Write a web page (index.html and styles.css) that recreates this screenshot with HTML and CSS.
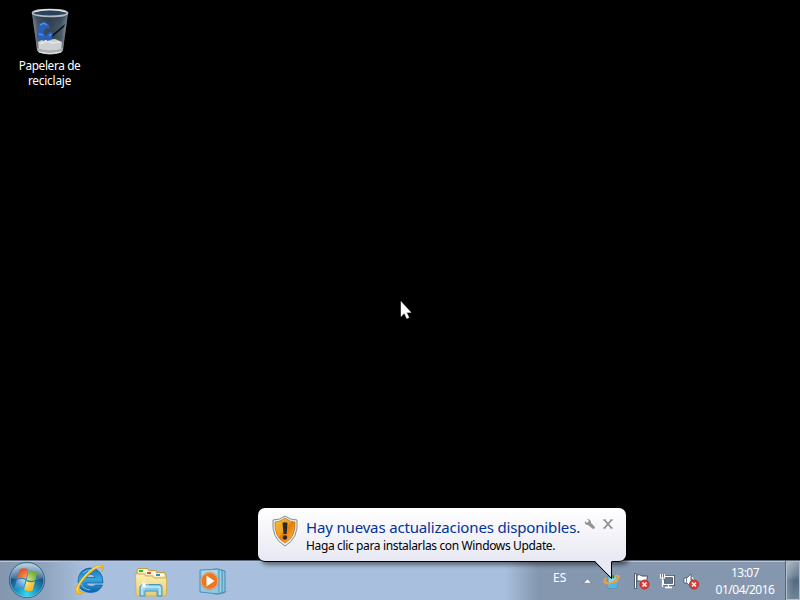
FILE: index.html
```
<!DOCTYPE html>
<html lang="es">
<head>
<meta charset="utf-8">
<title>Escritorio</title>
<link rel="stylesheet" href="styles.css">
</head>
<body>
<main class="desktop">
  <div class="shortcut">
    <svg class="bin" width="40" height="48" viewBox="0 0 40 48">
      <defs>
        <linearGradient id="glass"><stop offset="0" stop-color="#a5adb3"/><stop offset=".16" stop-color="#43505c"/><stop offset=".5" stop-color="#243343"/><stop offset=".82" stop-color="#44515c"/><stop offset="1" stop-color="#a7aeb3"/></linearGradient>
        <linearGradient id="binShade" x2="0" y2="1"><stop offset="0" stop-color="#142e4c" stop-opacity=".6"/><stop offset=".6" stop-color="#8b949b" stop-opacity=".1"/><stop offset="1" stop-color="#c8ccce" stop-opacity=".8"/></linearGradient>
      </defs>
      <path d="M2 6l5 37q1 4 13 4t13-4l5-37z" fill="url(#glass)"/>
      <path d="M2 6l5 37q1 4 13 4t13-4l5-37z" fill="url(#binShade)"/>
      <path d="M35 17L22 28l-1 3 13-11z" fill="#0b1119"/>
      <path d="M8 35q4-3 10-2l7-1 7 3-1 8q-12 4-22 0z" fill="#cdd0d0"/>
      <path d="M10 37l7-3 5 2 8-1" stroke="#e6e8e8" fill="none" stroke-width="1.5"/>
      <path d="M9 18l5-3 5 3 1 4-4-1-3 4-5-2zM7 25l5-1 2 3 3 3-3 4-6-3zM16 29l4-5 3 3-2 6-4 1z" fill="#2860bd"/>
      <path d="M10 18l4-2 3 2M9 27l4 1M19 29l2-2" stroke="#568deb" stroke-width="1.500" fill="none"/>
      <ellipse cx="20" cy="6" rx="17.5" ry="3.4" fill="#29435c" stroke="#b4babe" stroke-width="1.7"/>
      <path d="M4 5q16-5 32 0" stroke="#eee" stroke-width="1" fill="none"/>
      <path d="M7 41q13 5 26 0l-1 4q-12 5-24 0z" fill="#a9adaf"/>
      <path d="M9 45q11 3 22 0" stroke="#eee" fill="none"/>
    </svg>
    <div class="label"><span class="label-a">Papelera de</span><span class="label-b">reciclaje</span></div>
  </div>

  <svg class="cursor" width="12" height="19" viewBox="0 0 12 19"><path d="M1 .5v15l3.300-3.200 2.500 5.300 2.200-1-2.400-5.200h4.400z" fill="#fff" stroke="#e5e5ef" stroke-width=".5"/></svg>

  <footer class="taskbar">
    <div class="apps">
      <svg class="start" width="38" height="38" viewBox="0 0 38 38">
        <defs>
          <radialGradient id="orb" cx=".5" cy=".9" r=".9"><stop offset="0" stop-color="#35d8f5"/><stop offset=".38" stop-color="#198db8"/><stop offset=".65" stop-color="#1d5380"/><stop offset="1" stop-color="#6b91b4"/></radialGradient>
          <linearGradient id="orbShine" x2="0" y2="1"><stop offset="0" stop-color="#e5eff6" stop-opacity=".7"/><stop offset="1" stop-color="#b5d2e7" stop-opacity=".15"/></linearGradient>
          <radialGradient id="redPane" cx="1" cy="1" r="1"><stop offset="0" stop-color="#f8b46a"/><stop offset="1" stop-color="#e4582a"/></radialGradient>
          <radialGradient id="greenPane" cx="0" cy="1" r="1"><stop offset="0" stop-color="#dbe99b"/><stop offset="1" stop-color="#79ae31"/></radialGradient>
          <radialGradient id="bluePane" cx="1" cy="0" r="1"><stop offset="0" stop-color="#c0e8f6"/><stop offset="1" stop-color="#3f8fd0"/></radialGradient>
          <radialGradient id="yellowPane" cx="0" cy="0" r="1"><stop offset="0" stop-color="#fff3a8"/><stop offset="1" stop-color="#f6b925"/></radialGradient>
        </defs>
        <circle cx="19" cy="19" r="17.700" fill="url(#orb)" stroke="#2c5e82" stroke-width=".8"/>
        <circle cx="19" cy="19" r="16.800" fill="none" stroke="#a2ccdf" stroke-opacity=".5"/>
        <path d="M3 17Q4 3 19 2.500Q34 3 35 17Q19 23 3 17z" fill="url(#orbShine)"/>
        <path d="M11.700 8.300q4.500-2 8.500.3l-2.300 9.500q-4.200-2.300-8.700-.3z" fill="url(#redPane)"/>
        <path d="M21 9.400q4.200 2.500 8.600.5l-2.300 9.200q-4.400 2-8.600-.5z" fill="url(#greenPane)"/>
        <path d="M8.800 19q4.500-2 8.700.3l-2.300 8.900q-4.200-2.300-8.700-.5z" fill="url(#bluePane)"/>
        <path d="M18.400 20q4.200 2.300 8.600.3l-2.300 9q-4.400 2-8.600-.7z" fill="url(#yellowPane)"/>
      </svg>
      <svg class="ie" width="34" height="34" viewBox="0 0 34 34">
        <defs><linearGradient id="eBlue" x2="0" y2="1"><stop offset="0" stop-color="#1a6fb8"/><stop offset=".45" stop-color="#38a6de"/><stop offset="1" stop-color="#0962aa"/></linearGradient></defs>
        <path d="M30 20H13q1 3.500 5 3.500 3 0 4.500-1.500H29.500q-3 7.500-12 7.500Q5 29 5 17.500 6 5.500 17.500 5q12.500 1 12.500 15zM13.500 14.500h8.500Q21.500 11.300 17.700 11.300t-4.200 3.200z" fill="url(#eBlue)" stroke="#1266a9" stroke-width=".8"/>
        <path d="M10 10q4-4 10-3M8 21q2 5 9 6" stroke="#6bcaf0" stroke-width="1" fill="none"/>
        <path d="M29 9q4-7-1-7-7 0-15 9Q0 25 3 30q2 3 9-1-5 1-6-2-1-4 7-13Q23 4 28 4q2 0 1 5z" fill="#f6bd28" stroke="#db9b16" stroke-width=".5"/>
        <path d="M27 3Q18 5 11 14 4 23 4 28" stroke="#ffe477" fill="none"/>
      </svg>
      <svg class="folder" width="34" height="32" viewBox="0 0 34 32">
        <defs><linearGradient id="paper" x2="0" y2="1"><stop offset="0" stop-color="#fdf0b4"/><stop offset="1" stop-color="#e8cd70"/></linearGradient></defs>
        <path d="M3 2l1-1.500h10l1 2h7l1 2h8l1 3v18l-2 2H5l-2-3z" fill="#efdb8f" stroke="#c09e4b"/>
        <path d="M4.500 1.500h9v3h-9zM12 3.500h9v3h-9zM20 5.500h10v3H20z" fill="#fffdf2"/>
        <path d="M1.500 6h9l1 2h7l1.500 2h12.500V26q0 2-2 2H4q-2 0-2-2z" fill="url(#paper)" stroke="#cfb263"/>
        <path d="M5 2h4v2H5z" fill="#27b72c"/><path d="M13 4h4v2h-4z" fill="#db5028"/><path d="M22 6h4v2h-4z" fill="#2d92cc"/>
        <path d="M6 28v-9q0-2.500 3-2.500h16q3 0 3 2.500v9h-5v-5H11v5z" fill="#83c7e4" stroke="#4796be"/>
        <path d="M8 27v-7q0-1 1-1h16q1 0 1 1v7" stroke="#c5ebf7" stroke-width="1.500" fill="none"/>
        <path d="M10 12v10M5 17h10M7 14l6 6M13 14l-6 6" stroke="#fffef0" stroke-width=".6"/>
        <circle cx="10" cy="17" r="1.700" fill="#fff"/>
      </svg>
      <svg class="media" width="30" height="28" viewBox="0 0 30 28">
        <path d="M22 24l7-1-5 3-6 1z" fill="#64778e" opacity=".45"/>
        <path d="M17 1l9 2v21l-9 2z" fill="#8bc5df" stroke="#4388b3"/><path d="M15 1l8 1v23l-8 1z" fill="#9bd3e9" stroke="#4388b3"/><path d="M1 2l19-1v25L1 24z" fill="#8dc8e4" stroke="#4c93bb"/>
        <path d="M3 3l15-1v10L3 17z" fill="#c2e6f2" opacity=".6"/>
        <circle cx="10.500" cy="13" r="8.500" fill="#ee7522" stroke="#fbd7ac"/>
        <circle cx="10.500" cy="13" r="8.800" fill="none" stroke="#c45d22" stroke-width=".5"/>
        <path d="M7.500 7.500v11l8-5.500z" fill="#fff"/>
      </svg>
    </div>
    <div class="tray">
      <span class="lang">ES</span>
      <svg class="arrow" width="9" height="6" viewBox="0 0 9 6"><path d="M.5 5.200L4.500 .9l4 4.300z" fill="#fff" stroke="#4e5c70" stroke-width=".5"/></svg>
      <svg class="update" width="18" height="16" viewBox="0 0 18 16"><path d="M5 3l9-1v13H5z" fill="#8cd3ed" stroke="#4097c2"/><path d="M6 11l8-5v8H6z" fill="#50b7e4"/><path d="M6 4l3-1v3zM8 3l4-1-1 4z" fill="#51842a"/><path d="M4 5Q0 7 1.500 9q3 3 9 0 6-3 5-6-2-1-4 0M3 8l1 3M11 10l2-3 2 2" fill="none" stroke="#eda13b" stroke-width="1.900"/></svg>
      <svg class="flag" width="17" height="17" viewBox="0 0 17 17"><path d="M2.500 .500v15" stroke="#384354" stroke-width="3"/><path d="M4 2q3-1 5 1h5.500l-1 6q-4 1-6-1H4z" fill="#fff" stroke="#465368"/><path d="M2.500 1v14" stroke="#fff" stroke-width="1.300"/><circle cx="11.500" cy="11.500" r="4.500" fill="#df3e35" stroke="#b62f2e"/><path d="M9.500 9.500l4 4m0-4l-4 4" stroke="#fff" stroke-width="1.500"/></svg>
      <svg class="network" width="16" height="16" viewBox="0 0 16 16"><path d="M6 3.500h8.500v8H4.500V7" fill="#64768e" stroke="#384354" stroke-width="3"/><path d="M6 3.500h8.500v8H4.500V7M9.500 12v2M6 14.500h7" fill="none" stroke="#fff" stroke-width="1.300"/><path d="M1.500 1v4h4V1M3.500 1v13" fill="#48566b" stroke="#fff" stroke-width="1.200"/></svg>
      <svg class="sound" width="17" height="17" viewBox="0 0 17 17"><path d="M1 5h3l4-4v13l-4-4H1z" fill="#fff" stroke="#48576c" stroke-width=".8"/><path d="M3.500 5v5" stroke="#7b8798"/><path d="M9 4q3 3 1 6" stroke="#fff" fill="none"/><circle cx="11" cy="11.500" r="4.500" fill="#df3e35" stroke="#b62f2e"/><path d="M9 9.500l4 4m0-4l-4 4" stroke="#fff" stroke-width="1.500"/></svg>
      <div class="clock"><span class="time">13:07</span><span class="date">01/04/2016</span></div>
      <div class="peek"></div>
    </div>
  </footer>

  <aside class="balloon">
    <svg class="shield" width="28" height="32" viewBox="0 0 28 32">
      <defs><linearGradient id="gold" x2="1" y2="1"><stop offset="0" stop-color="#f5bc41"/><stop offset=".45" stop-color="#f1a018"/><stop offset=".52" stop-color="#e67b08"/><stop offset="1" stop-color="#ffc44b"/></linearGradient></defs>
      <path d="M14 1q5 4 12 4 2 18-12 26Q0 23 2 5q7 0 12-4z" fill="#edf0ef" stroke="#858b8c"/>
      <path d="M14 3q5 4 10 4 1 15-10 21Q3 22 4 7q5 0 10-4z" fill="url(#gold)" stroke="#bb741c" stroke-width=".7"/>
      <path d="M11.500 8q2.500-1.600 5 0L15.600 19h-3.100z" fill="#27282b"/><circle cx="14" cy="22.500" r="2.200" fill="#27282b"/>
    </svg>
    <div class="message"><div class="title">Hay nuevas actualizaciones disponibles.</div><div class="detail">Haga clic para instalarlas con Windows Update.</div></div>
    <svg class="wrench" width="12" height="12" viewBox="0 0 12 12"><path d="M3 1l2 2-2 2-2-2q-1 4 3 4l5 4q2 0 2-2L7 5q0-4-4-4z" fill="#929292"/></svg>
    <svg class="close" width="10" height="10" viewBox="0 0 10 10"><path d="M1.500 1l7 8m0-8l-7 8" stroke="#8b8b8b" stroke-width="1.700"/><path d="M0 1h3M7 1h3M0 9h3M7 9h3" stroke="#8b8b8b"/></svg>
    <svg class="tail" width="22" height="20" viewBox="0 0 22 20"><path d="M2 0v1l17 17V0z" fill="#e9e9f4"/><path d="M.5 1.500h1l17 17v-17" fill="none" stroke="#000"/></svg>
  </aside>
</main>
</body>
</html>
```
FILE: styles.css
```
* { box-sizing: border-box; }
body { margin: 0; background: #000; }
svg { display: block; flex: none; }
span { white-space: nowrap; }
.desktop { position: relative; width: 800px; height: 600px; overflow: hidden; display: flex; flex-direction: column; justify-content: space-between; background: #000; font-family: "Noto Sans", "Open Sans", sans-serif; }
.shortcut { width: 99px; padding-top: 7px; display: flex; flex-direction: column; align-items: center; color: #fff; }
.label { display: flex; flex-direction: column; align-items: center; margin-top: 3px; font-size: 11.8px; line-height: 15px; }
.label-a { letter-spacing: -.35px; }
.label-b { letter-spacing: -.2px; }
.cursor { position: absolute; left: 400px; top: 301px; }
.taskbar { height: 40px; display: flex; justify-content: space-between; border-top: 1px solid #5d6879; box-shadow: inset 0 1px #b8c7da; background: linear-gradient(90deg, #8396ae 0, #8fa4be 45px, #a8c0dd 85px, #a8c0dd 505px, #8497af 538px, #8497af 100%); }
.apps { display: flex; align-items: flex-start; }
.start { margin: 0 0 0 8px; }
.ie { margin: 2px 0 0 27px; }
.folder { margin: 7px 0 0 27px; }
.media { margin: 7px 0 0 31px; }
.tray { display: flex; width: 247px; color: #fff; }
.lang { width: 20px; flex: none; margin-top: 9px; font-size: 12px; line-height: 16px; letter-spacing: 0; }
.arrow { margin: 17px 0 0 10px; }
.update { margin: 12px 0 0 11px; }
.flag { margin: 12px 0 0 12px; }
.network { margin: 12px 0 0 9px; }
.sound { margin: 12px 0 0 8px; }
.clock { width: 86px; flex: none; margin-top: 3px; padding-left: 4px; display: flex; flex-direction: column; align-items: center; font-size: 12px; line-height: 17px; }
.time { letter-spacing: -.5px; }
.date { letter-spacing: -.5px; }
.peek { width: 14px; flex: none; height: 39px; border: 1px solid #b1bfcc; box-shadow: -1px 0 #566579; background: linear-gradient(100deg, rgba(255,255,255,.3), rgba(255,255,255,0) 60%), linear-gradient(#8c9dae, #6f8296 35%, #55697f 50%, #71859a); }
.balloon { position: absolute; left: 258px; top: 508px; width: 368px; height: 54px; display: flex; border-radius: 7px; border-bottom: 1px solid #000; background: linear-gradient(#fff, #e8e8f3); box-shadow: 3px 3px 4px rgba(0,0,0,.45); }
.shield { margin: 7px 0 0 13px; }
.message { width: 275px; margin: 9px 0 0 7px; white-space: nowrap; }
.title { font-size: 15px; line-height: 21px; letter-spacing: -.16px; color: #003399; }
.detail { font-size: 12px; line-height: 16px; letter-spacing: -.36px; color: #000; }
.wrench { margin: 10px 0 0 3px; }
.close { margin: 11px 0 0 7px; }
.tail { position: absolute; left: 335px; top: 52px; }
```
